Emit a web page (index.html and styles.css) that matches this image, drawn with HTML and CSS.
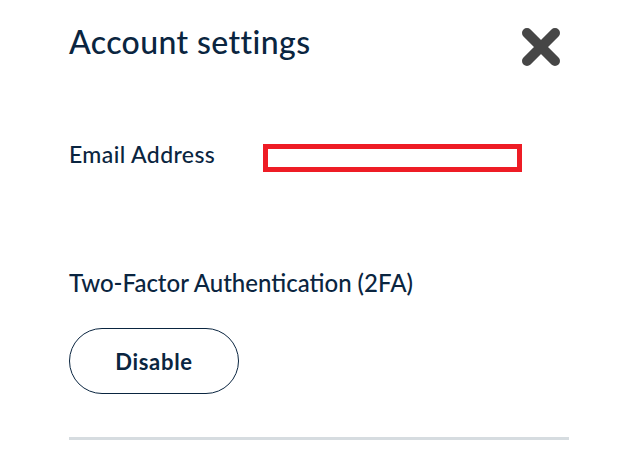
FILE: index.html
```html
<!DOCTYPE html>
<html lang="en">
<head>
<meta charset="utf-8">
<title>Account settings</title>
<link rel="stylesheet" href="styles.css">
</head>
<body>
<div class="panel">
  <div class="header">
    <h1 class="title">Account settings</h1>
    <button class="close" aria-label="Close">
      <svg width="40" height="40" viewBox="0 0 40 40" aria-hidden="true">
        <path d="M6 6 L34 34 M34 6 L6 34" stroke="#464646" stroke-width="10" stroke-linecap="round" fill="none"/>
      </svg>
    </button>
  </div>
  <div class="row">
    <div class="label">Email Address</div>
    <div class="email-box"></div>
  </div>
  <h2 class="section-title">Two-Factor Authentication (2FA)</h2>
  <button class="btn-outline">Disable</button>
  <div class="divider"></div>
</div>
</body>
</html>
```
FILE: styles.css
```css
html, body {
  margin: 0;
  padding: 0;
  background: #ffffff;
}
body {
  font-family: Lato, "Open Sans", sans-serif;
  color: #0a2540;
}
.panel {
  width: 500px;
  padding: 24px 0 0 69px;
  display: flex;
  flex-direction: column;
  align-items: flex-start;
}
.header {
  width: 100%;
  height: 36px;
  display: flex;
  justify-content: space-between;
  align-items: flex-start;
}
.title {
  margin: 0;
  font-size: 32px;
  font-weight: 500;
  letter-spacing: 0.4px;
  line-height: 36px;
}
.close {
  margin: 3px 8px 0 0;
  padding: 0;
  border: 0;
  background: none;
  width: 40px;
  height: 40px;
  display: flex;
}
.row {
  margin-top: 82px;
  display: flex;
  align-items: flex-start;
}
.label {
  width: 194px;
  font-size: 23px;
  font-weight: 500;
  letter-spacing: 0.4px;
  line-height: 25px;
}
.email-box {
  margin-top: 2px;
  width: 249px;
  height: 18px;
  border: 5px solid #ee1c25;
}
.section-title {
  margin: 97px 0 0 0;
  font-size: 24px;
  font-weight: 500;
  line-height: 28px;
}
.btn-outline {
  margin-top: 31px;
  width: 170px;
  height: 66px;
  border: 1px solid #0a2540;
  border-radius: 33px;
  background: #ffffff;
  color: #0a2540;
  font-family: Lato, "Open Sans", sans-serif;
  font-size: 22px;
  font-weight: 700;
  letter-spacing: 0.7px;
  padding: 0;
}
.divider {
  margin-top: 43px;
  width: 500px;
  height: 3px;
  background: #d6dce0;
}
```
